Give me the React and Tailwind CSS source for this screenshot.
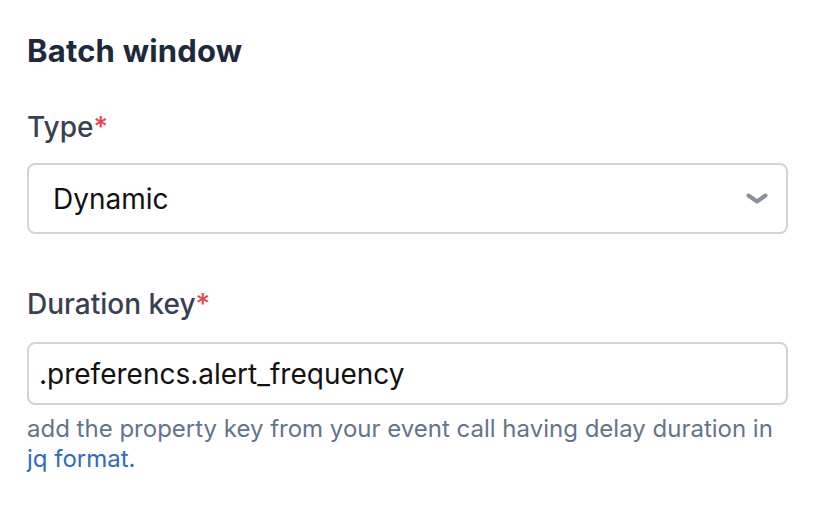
const Label = ({ children }) => (
  <label className="flex text-[28px] font-medium leading-8 text-[#374151]">
    {children}
    <span className="text-[#ef4444]">*</span>
  </label>
);

export default function App() {
  return (
    <div
      className="w-[818px] h-[520px] bg-white px-[27px] pt-[33px]"
      style={{ fontFamily: 'Inter, "Noto Sans", sans-serif' }}
    >
      <h2 className="text-[31px] font-bold leading-9 tracking-[0.2px] text-[#1e293b]">Batch window</h2>

      {/* Type */}
      <div className="mt-[42px]">
        <Label>Type</Label>
        <div className="mt-[20px] flex h-[71px] w-[761px] items-center justify-between rounded-lg border-2 border-[#d1d5db] pl-[24px] pr-[18px]">
          <span className="text-[28px] text-[#111111]">Dynamic</span>
          <svg width="22" height="11" viewBox="0 0 22 11" fill="none" className="text-[#8b909b]">
            <path d="M2.5 2.5 L11 8.5 L19.5 2.5" stroke="currentColor" strokeWidth="4" strokeLinecap="round" strokeLinejoin="round" />
          </svg>
        </div>
      </div>

      {/* Duration key */}
      <div className="mt-[54px]">
        <Label>Duration key</Label>
        <div className="mt-[22px] flex h-[63px] w-[761px] items-center rounded-lg border-2 border-[#d1d5db] pl-[10px]">
          <span className="text-[28px] text-[#111111]">.preferencs.alert_frequency</span>
        </div>
        <p className="mt-[9px] text-[24px] leading-[30px] text-[#64748b]">
          add the property key from your event call having delay duration in{' '}
          <span className="text-[#2f6bc4]">jq format.</span>
        </p>
      </div>
    </div>
  );
}
